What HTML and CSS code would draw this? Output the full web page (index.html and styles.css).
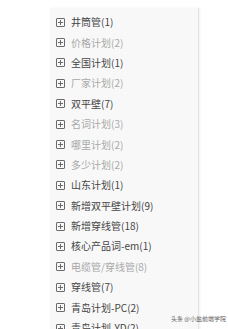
FILE: index.html
```html
<!DOCTYPE html>
<html lang="zh">
<head>
<meta charset="utf-8">
<link rel="stylesheet" href="styles.css">
</head>
<body>
<div class="panel">
  <ul class="tree">
    <li class="row"><span class="box"></span><span class="label">井筒管(1)</span></li>
    <li class="row muted"><span class="box"></span><span class="label">价格计划(2)</span></li>
    <li class="row"><span class="box"></span><span class="label">全国计划(1)</span></li>
    <li class="row muted"><span class="box"></span><span class="label">厂家计划(2)</span></li>
    <li class="row"><span class="box"></span><span class="label">双平壁(7)</span></li>
    <li class="row muted"><span class="box"></span><span class="label">名词计划(3)</span></li>
    <li class="row muted"><span class="box"></span><span class="label">哪里计划(2)</span></li>
    <li class="row muted"><span class="box"></span><span class="label">多少计划(2)</span></li>
    <li class="row"><span class="box"></span><span class="label">山东计划(1)</span></li>
    <li class="row"><span class="box"></span><span class="label">新增双平壁计划(9)</span></li>
    <li class="row"><span class="box"></span><span class="label">新增穿线管(18)</span></li>
    <li class="row"><span class="box"></span><span class="label">核心产品词-em(1)</span></li>
    <li class="row muted"><span class="box"></span><span class="label">电缆管/穿线管(8)</span></li>
    <li class="row"><span class="box"></span><span class="label">穿线管(7)</span></li>
    <li class="row"><span class="box"></span><span class="label">青岛计划-PC(2)</span></li>
    <li class="row"><span class="box"></span><span class="label">青岛计划-YD(2)</span></li>
  </ul>
</div>
<div class="watermark">头条 @小盐前端学院</div>
</body>
</html>
```
FILE: styles.css
```css
html, body {
  margin: 0;
  padding: 0;
  background: #ffffff;
  overflow: hidden;
  height: 329px;
}
body {
  font-family: "Noto Sans CJK SC", "Noto Sans", sans-serif;
}
.panel {
  margin: 8px 0 0 50px;
  width: 149px;
  height: 340px;
  background: #f8f8f8;
  border-right: 1px solid #e2e2e2;
  box-shadow: 1px 0 2px rgba(0,0,0,0.06);
  padding-top: 4px;
  box-sizing: border-box;
}
.tree {
  list-style: none;
  margin: 0;
  padding: 0;
}
.row {
  display: flex;
  align-items: center;
  height: 20.4px;
  padding-left: 6px;
  gap: 6px;
  color: #454545;
  font-size: 10px;
  white-space: nowrap;
}
.row.muted {
  color: #a8a8a8;
}
.box {
  position: relative;
  width: 7px;
  height: 7px;
  border: 1px solid #6a6a6a;
  border-radius: 1px;
  flex: none;
}
.box::before,
.box::after {
  content: "";
  position: absolute;
  background: #6a6a6a;
}
.box::before {
  left: 1px;
  right: 1px;
  top: 3px;
  height: 1px;
}
.box::after {
  top: 1px;
  bottom: 1px;
  left: 3px;
  width: 1px;
}
.label {
  line-height: 1;
}
.watermark {
  position: absolute;
  left: 171px;
  top: 314px;
  font-size: 6px;
  color: #666;
  white-space: nowrap;
}
```
